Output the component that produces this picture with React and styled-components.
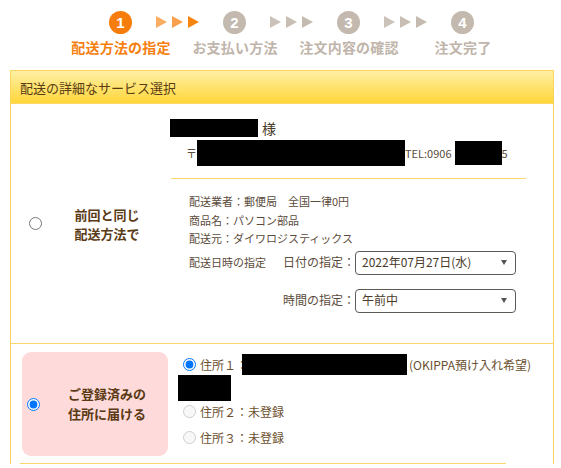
import React from "react";
import styled, { createGlobalStyle } from "styled-components";

const Global = createGlobalStyle`
  html, body { margin: 0; padding: 0; background: #fff; }
  body {
    font-family: "Noto Sans CJK JP", "Noto Sans", sans-serif;
    color: #5b4b3b;
  }
  * { box-sizing: border-box; }
`;

const Page = styled.div`
  width: 561px;
  height: 468px;
  overflow: hidden;
`;

const Stepper = styled.div`
  height: 70px;
  padding-top: 10px;
`;

const CircleRow = styled.div`
  display: flex;
  align-items: center;
  margin-left: 109px;
  height: 24px;
`;

const Circle = styled.div`
  width: 23px;
  height: 23px;
  border-radius: 50%;
  background: ${(p) => (p.$active ? "#f67d0b" : "#c4b9ae")};
  color: #fff;
  font-family: "Liberation Sans", Arial, sans-serif;
  font-weight: bold;
  font-size: 15px;
  display: flex;
  align-items: center;
  justify-content: center;
`;

const ArrowGroup = styled.svg`
  display: block;
  margin: 0 24px;
`;

const LabelRow = styled.div`
  display: flex;
  margin-left: 64px;
  margin-top: 4px;
`;

const StepLabel = styled.div`
  width: 114px;
  text-align: center;
  font-size: 14px;
  font-weight: bold;
  line-height: 18px;
  letter-spacing: 0.2px;
  color: ${(p) => (p.$active ? "#f57f10" : "#bfb5aa")};
`;

const Arrows = ({ colors }) => (
  <ArrowGroup width="43" height="12" viewBox="0 0 43 12">
    {colors.map((c, i) => (
      <polygon key={i} points={`${i * 16},0 ${i * 16 + 11},6 ${i * 16},12`} fill={c} />
    ))}
  </ArrowGroup>
);

const Panel = styled.div`
  margin-left: 10px;
  width: 544px;
  border: 1px solid #fcd35b;
  border-bottom: none;
`;

const PanelHeader = styled.div`
  height: 32px;
  display: flex;
  align-items: center;
  padding-left: 9px;
  font-size: 13px;
  color: #5a3c14;
  background: linear-gradient(#fff0a4, #ffd63a);
`;

const Row = styled.div`
  display: grid;
  grid-template-columns: ${(p) => p.$cols};
  border-top: 1px solid #fdd66b;
  height: ${(p) => p.$h}px;
`;

const ChoiceCell = styled.div`
  display: flex;
  align-items: center;
  padding-left: ${(p) => p.$pl}px;
  ${(p) =>
    p.$pink &&
    `
    background: #ffdada;
    border-radius: 9px;
    margin: 8px 0 7px 11px;
  `}
`;

const Radio = styled.input.attrs({ type: "radio" })`
  margin: 0;
  width: 13px;
  height: 13px;
  flex: none;
`;

const ChoiceLabel = styled.div`
  flex: 1;
  text-align: center;
  font-size: 13px;
  font-weight: bold;
  line-height: ${(p) => p.$lh}px;
  color: #5a3a14;
  padding-left: ${(p) => p.$pl}px;
`;

const DetailCell = styled.div`
  padding-top: 14px;
`;

const Redact = styled.span`
  display: inline-block;
  background: #000;
  width: ${(p) => p.$w}px;
  height: ${(p) => p.$h}px;
  vertical-align: middle;
  margin-left: ${(p) => p.$ml || 0}px;
  margin-right: ${(p) => p.$mr || 0}px;
`;

const NameLine = styled.div`
  display: flex;
  align-items: center;
  height: 20px;
  font-size: 14px;
  color: #4a3a28;
  margin-left: -1px;
`;

const AddressLine = styled.div`
  display: flex;
  align-items: center;
  height: 28px;
  padding-left: 15px;
  font-size: 11px;
  color: #5b4b3b;
  margin-top: 1px;
`;

const Divider = styled.div`
  width: 355px;
  height: 1px;
  background: #fdd66b;
  margin-top: 11px;
`;

const InfoBlock = styled.div`
  padding-left: 18px;
  margin-top: 13px;
  font-size: 11px;
  line-height: 18.5px;
  color: #5b4b3b;
`;

const FieldGrid = styled.div`
  display: grid;
  grid-template-columns: 94px 72px 161px;
  row-gap: 14px;
  align-items: center;
  margin-top: 3px;
`;

const FieldLabel = styled.div`
  font-size: ${(p) => p.$fs}px;
  white-space: nowrap;
  color: #5b4b3b;
`;

const SelectBox = styled.div`
  height: 24px;
  border: 1px solid #5e5a55;
  border-radius: 4px;
  display: flex;
  align-items: center;
  justify-content: space-between;
  padding: 0 8px 0 6px;
  font-size: 12px;
  color: #4a3a2a;
  background: #fff;
`;

const Caret = styled.span`
  width: 0;
  height: 0;
  border-left: 3px solid transparent;
  border-right: 3px solid transparent;
  border-top: 5px solid #555;
`;

const OptionList = styled.div`
  padding-top: 10px;
  padding-left: 15px;
`;

const OptionLine = styled.div`
  display: flex;
  align-items: center;
  font-size: 12px;
  color: #6b5030;
  height: ${(p) => p.$h}px;
`;

const OptionText = styled.span`
  margin-left: 4px;
  white-space: nowrap;
`;

const BottomLine = styled.div`
  margin-left: 9px;
  width: 486px;
  height: 1px;
  background: #fdd66b;
`;

const Select = ({ value }) => (
  <SelectBox>
    <span>{value}</span>
    <Caret />
  </SelectBox>
);

export default function App() {
  return (
    <Page>
      <Global />
      <Stepper>
        <CircleRow>
          <Circle $active>1</Circle>
          <Arrows colors={["#f9ad62", "#f9a04d", "#f5850f"]} />
          <Circle>2</Circle>
          <Arrows colors={["#cbc2b9", "#c8beb4", "#c5bbb0"]} />
          <Circle>3</Circle>
          <Arrows colors={["#cbc2b9", "#c8beb4", "#c5bbb0"]} />
          <Circle>4</Circle>
        </CircleRow>
        <LabelRow>
          <StepLabel $active>配送方法の指定</StepLabel>
          <StepLabel>お支払い方法</StepLabel>
          <StepLabel>注文内容の確認</StepLabel>
          <StepLabel>注文完了</StepLabel>
        </LabelRow>
      </Stepper>
      <Panel>
        <PanelHeader>配送の詳細なサービス選択</PanelHeader>
        <Row $cols="160px 1fr" $h={240}>
          <ChoiceCell $pl={18}>
            <Radio name="method" />
            <ChoiceLabel $lh={19} $pl={1}>
              前回と同じ
              <br />
              配送方法で
            </ChoiceLabel>
          </ChoiceCell>
          <DetailCell>
            <NameLine>
              <Redact $w={88} $h={18} $mr={4} />
              様
            </NameLine>
            <AddressLine>
              〒
              <Redact $w={208} $h={26} />
              TEL:0906
              <Redact $w={47} $h={24} $ml={3} />
              5
            </AddressLine>
            <Divider />
            <InfoBlock>
              <div>配送業者：郵便局　全国一律0円</div>
              <div>商品名：パソコン部品</div>
              <div>配送元：ダイワロジスティックス</div>
              <FieldGrid>
                <FieldLabel $fs={11}>配送日時の指定</FieldLabel>
                <FieldLabel $fs={12}>日付の指定：</FieldLabel>
                <Select value="2022年07月27日(水)" />
                <span />
                <FieldLabel $fs={12}>時間の指定：</FieldLabel>
                <Select value="午前中" />
              </FieldGrid>
            </InfoBlock>
          </DetailCell>
        </Row>
        <Row $cols="157px 1fr" $h={120}>
          <ChoiceCell $pink $pl={5}>
            <Radio name="method" defaultChecked />
            <ChoiceLabel $lh={20} $pl={6}>
              ご登録済みの
              <br />
              住所に届ける
            </ChoiceLabel>
          </ChoiceCell>
          <OptionList>
            <OptionLine $h={21}>
              <Radio name="addr" defaultChecked />
              <OptionText>住所１：</OptionText>
              <Redact $w={165} $h={21} $ml={-6} $mr={2} />
              <span>(OKIPPA預け入れ希望)</span>
            </OptionLine>
            <OptionLine $h={26}>
              <Redact $w={53} $h={26} $ml={-5} />
            </OptionLine>
            <OptionLine $h={20}>
              <Radio name="addr" disabled />
              <OptionText>住所２：未登録</OptionText>
            </OptionLine>
            <OptionLine $h={32}>
              <Radio name="addr" disabled />
              <OptionText>住所３：未登録</OptionText>
            </OptionLine>
          </OptionList>
        </Row>
        <BottomLine />
      </Panel>
    </Page>
  );
}
